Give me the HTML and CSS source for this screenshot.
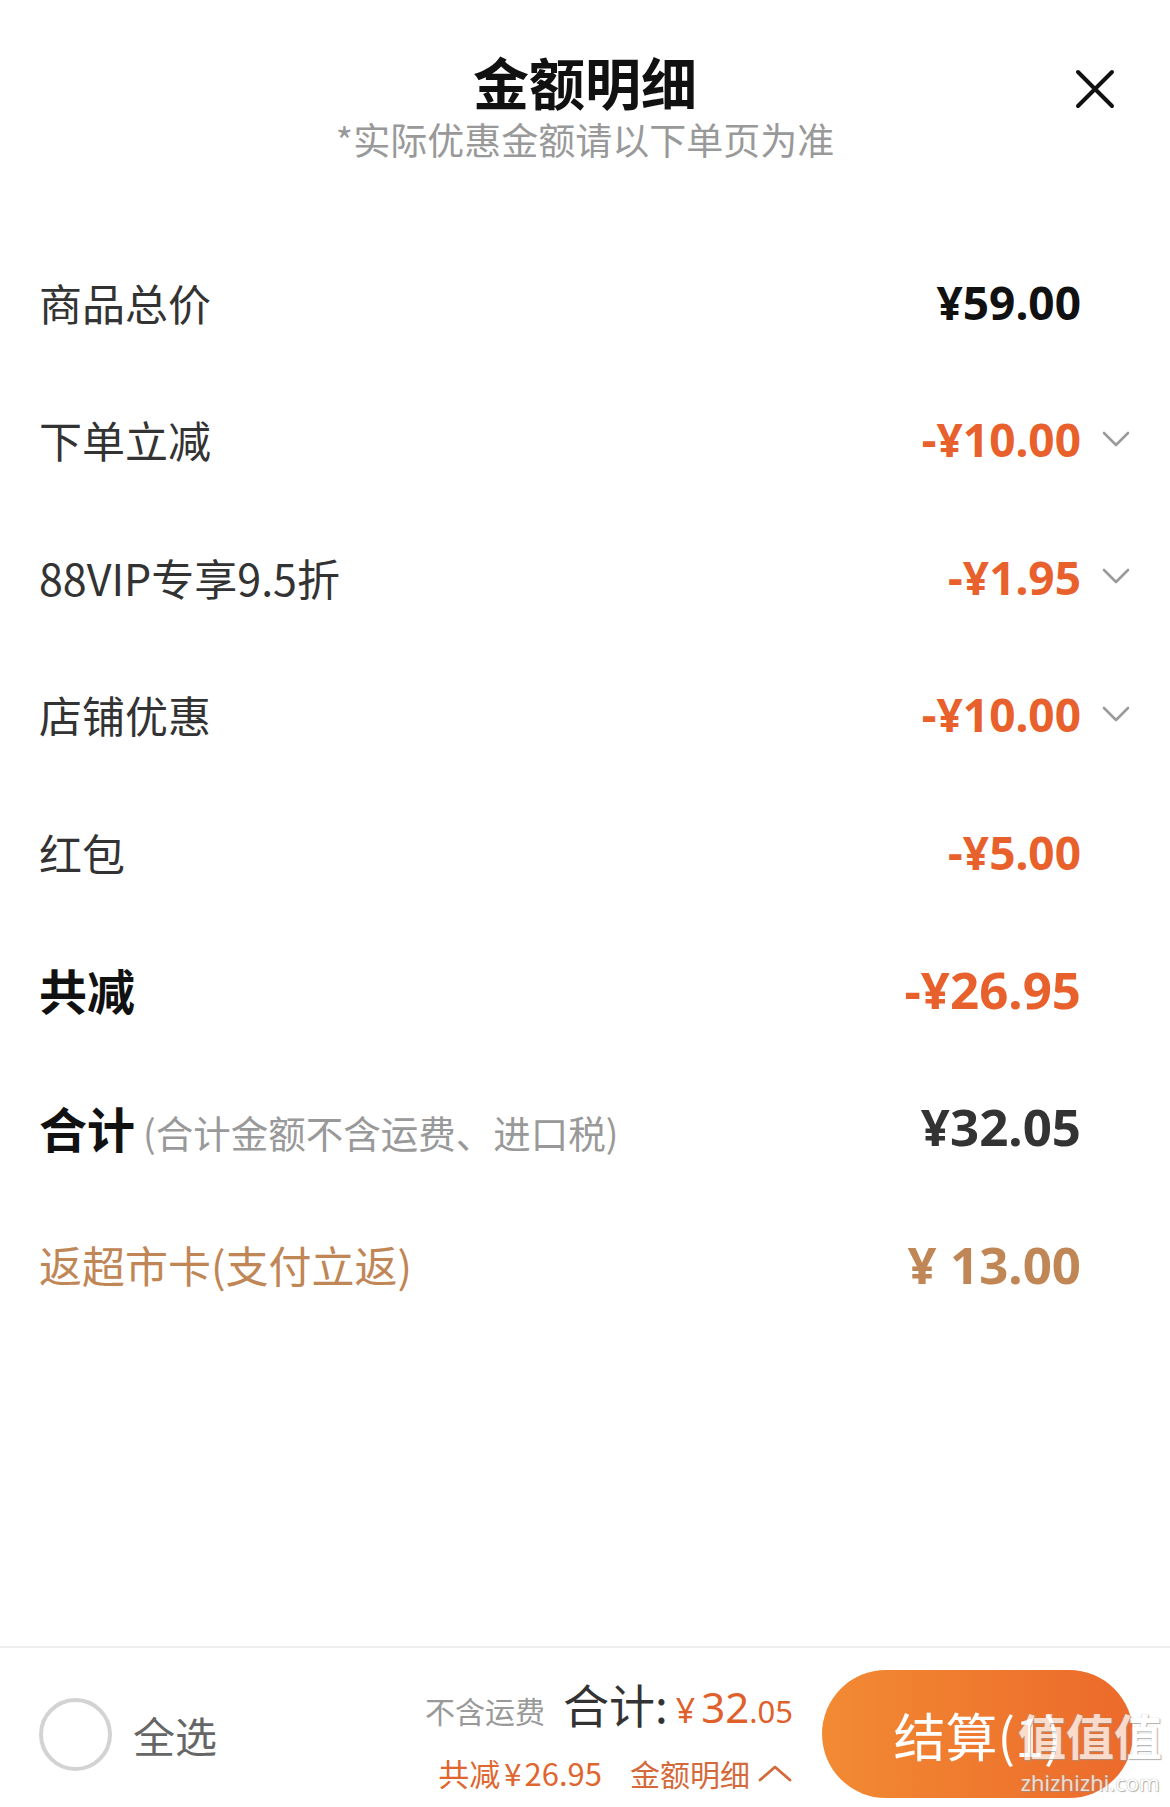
FILE: index.html
```html
<!DOCTYPE html>
<html lang="zh-CN">
<head>
<meta charset="utf-8">
<title>金额明细</title>
<link rel="stylesheet" href="styles.css">
</head>
<body>
<div class="sheet">
  <header class="head">
    <div class="head-main">
      <h1 class="title">金额明细</h1>
      <p class="subtitle">*实际优惠金额请以下单页为准</p>
    </div>
    <button class="close" aria-label="关闭">
      <svg width="40" height="40" viewBox="0 0 40 40"><path d="M3 3 L37 37 M37 3 L3 37" stroke="#111" stroke-width="4" stroke-linecap="round" fill="none"/></svg>
    </button>
  </header>

  <ul class="rows">
    <li class="row">
      <span class="label">商品总价</span>
      <span class="val val-black">¥59.00</span>
      <span class="chev"></span>
    </li>
    <li class="row">
      <span class="label">下单立减</span>
      <span class="val val-orange">-¥10.00</span>
      <span class="chev"><svg width="28" height="17" viewBox="0 0 28 17"><path d="M2 2 L14 14 L26 2" stroke="#9a9a9a" stroke-width="2.6" fill="none" stroke-linecap="round" stroke-linejoin="round"/></svg></span>
    </li>
    <li class="row">
      <span class="label">88VIP专享9.5折</span>
      <span class="val val-orange">-¥1.95</span>
      <span class="chev"><svg width="28" height="17" viewBox="0 0 28 17"><path d="M2 2 L14 14 L26 2" stroke="#9a9a9a" stroke-width="2.6" fill="none" stroke-linecap="round" stroke-linejoin="round"/></svg></span>
    </li>
    <li class="row">
      <span class="label">店铺优惠</span>
      <span class="val val-orange">-¥10.00</span>
      <span class="chev"><svg width="28" height="17" viewBox="0 0 28 17"><path d="M2 2 L14 14 L26 2" stroke="#9a9a9a" stroke-width="2.6" fill="none" stroke-linecap="round" stroke-linejoin="round"/></svg></span>
    </li>
    <li class="row">
      <span class="label">红包</span>
      <span class="val val-orange">-¥5.00</span>
      <span class="chev"></span>
    </li>
    <li class="row">
      <span class="label label-strong">共减</span>
      <span class="val val-big val-orange">-¥26.95</span>
      <span class="chev"></span>
    </li>
    <li class="row">
      <span class="label"><span class="label-strong">合计</span><span class="note">(合计金额不含运费、进口税)</span></span>
      <span class="val val-big val-dark">¥32.05</span>
      <span class="chev"></span>
    </li>
    <li class="row">
      <span class="label label-tan">返超市卡(支付立返)</span>
      <span class="val val-big val-tan">¥ 13.00</span>
      <span class="chev"></span>
    </li>
  </ul>

  <div class="spacer"></div>

  <footer class="bar">
    <span class="check"></span>
    <span class="all">全选</span>
    <div class="sum">
      <div class="sum-line1">
        <span class="nofee">不含运费</span>
        <span class="total-label">合计:</span>
        <span class="total-val"><span class="yen">¥</span><span class="int">32</span><span class="dec">.05</span></span>
      </div>
      <div class="sum-line2">
        <span class="saved">共减<span class="saved-yen">¥</span>26.95</span>
        <span class="detail">金额明细</span>
        <svg width="36" height="19" viewBox="0 0 36 19"><path d="M3 16 L18 3 L33 16" stroke="#d4693a" stroke-width="2.8" fill="none" stroke-linecap="round" stroke-linejoin="round"/></svg>
      </div>
    </div>
    <button class="btn">结算(1)</button>
  </footer>
</div>

<div class="watermark">
  <span class="wm-big">值值值</span>
  <span class="wm-small">zhizhizhi.com</span>
</div>
</body>
</html>
```

FILE: styles.css
```css
* { box-sizing: border-box; }
html, body { margin: 0; padding: 0; }
body {
  width: 1170px;
  height: 1807px;
  background: #fff;
  font-family: "Noto Sans CJK SC", "Noto Sans", sans-serif;
  color: #333;
  position: relative;
  overflow: hidden;
}
.sheet {
  display: flex;
  flex-direction: column;
  height: 1807px;
}

/* header */
.head {
  display: grid;
  grid-template-columns: 1fr auto 1fr;
  padding: 51px 55px 72px;
}
.head-main { grid-column: 2; text-align: center; }
.title {
  margin: 0;
  font-size: 56px;
  line-height: 60px;
  font-weight: 700;
  color: #111;
}
.subtitle {
  margin: 6px 0 0;
  font-size: 37px;
  line-height: 44px;
  color: #999;
}
.close {
  grid-column: 3;
  justify-self: end;
  align-self: start;
  margin-top: 18px;
  width: 40px;
  height: 40px;
  padding: 0;
  border: 0;
  background: none;
  display: block;
}
.close svg { display: block; }

/* rows */
.rows { list-style: none; margin: 0; padding: 0; }
.row {
  display: flex;
  align-items: center;
  height: 137.5px;
  padding: 0 40px 0 39px;
}
.label {
  flex: 1;
  font-size: 43px;
  color: #333;
  display: flex;
  align-items: baseline;
}
.label-strong { font-size: 48px; font-weight: 700; color: #111; }
.note { font-size: 37.5px; color: #999; margin-left: 8px; }
.label-tan { color: #c08656; }
.val {
  font-family: "Noto Sans", sans-serif;
  font-weight: 700;
  font-size: 46px;
  line-height: 1;
}
.val-big { font-size: 51px; }
.val-black { color: #111; }
.val-orange { color: #e8612c; }
.val-dark { color: #333; }
.val-tan { color: #c08656; }
.chev {
  width: 49px;
  display: flex;
  justify-content: flex-end;
  align-items: center;
}
.chev svg { display: block; }

.spacer { flex: 1; }

/* bottom bar */
.bar {
  display: flex;
  align-items: center;
  border-top: 2px solid #eeeeee;
  padding: 22px 37px 9px 39px;
}
.check {
  width: 73px;
  height: 73px;
  border-radius: 50%;
  border: 4px solid #d3d3d3;
  flex: none;
}
.all {
  margin-left: 21px;
  font-size: 42px;
  color: #666;
}
.sum {
  margin-left: auto;
  display: flex;
  flex-direction: column;
  align-items: flex-end;
}
.sum-line1 {
  display: flex;
  align-items: baseline;
  line-height: 56px;
}
.nofee { font-size: 30px; color: #999; margin-right: 18px; }
.total-label { font-size: 46px; color: #333; margin-right: 8px; }
.total-val { color: #e0602c; font-family: "Noto Sans", sans-serif; }
.yen { font-size: 34px; margin-right: 6px; }
.int { font-size: 42px; }
.dec { font-size: 31px; }
.sum-line2 {
  display: flex;
  align-items: center;
  line-height: 40px;
  margin-top: 8px;
}
.saved { font-family: "Noto Sans CJK SC", sans-serif; font-size: 31px; color: #e0662f; }
.saved-yen { margin: 0 3px 0 4px; }
.detail { font-family: "Noto Sans CJK SC", sans-serif; font-size: 30px; color: #d4693a; margin-left: 28px; margin-right: 7px; }
.sum-line2 svg { display: block; }
.btn {
  margin-left: 29px;
  flex: none;
  width: 311px;
  height: 128px;
  border-radius: 64px;
  border: 0;
  background: linear-gradient(90deg, #f28a33 0%, #ec6a2b 100%);
  color: #fff;
  font-family: "Noto Sans CJK SC", sans-serif;
  font-size: 52px;
  display: flex;
  align-items: center;
  justify-content: center;
  padding: 0;
}

/* watermark overlay */
.watermark {
  position: absolute;
  left: 1018px;
  top: 1698px;
  display: flex;
  flex-direction: column;
  align-items: center;
  pointer-events: none;
  opacity: 0.75;
}
.wm-big {
  font-family: "Noto Sans CJK SC", sans-serif;
  font-weight: 700;
  font-size: 48px;
  line-height: 72px;
  color: #fff;
  text-shadow: 0 0 1px #888, 1px 1px 1px #999;
}
.wm-small {
  font-family: "Noto Sans", sans-serif;
  font-size: 22px;
  line-height: 24px;
  color: #fff;
  text-shadow: 0 0 1px #777, 1px 1px 1px #999;
}
```
